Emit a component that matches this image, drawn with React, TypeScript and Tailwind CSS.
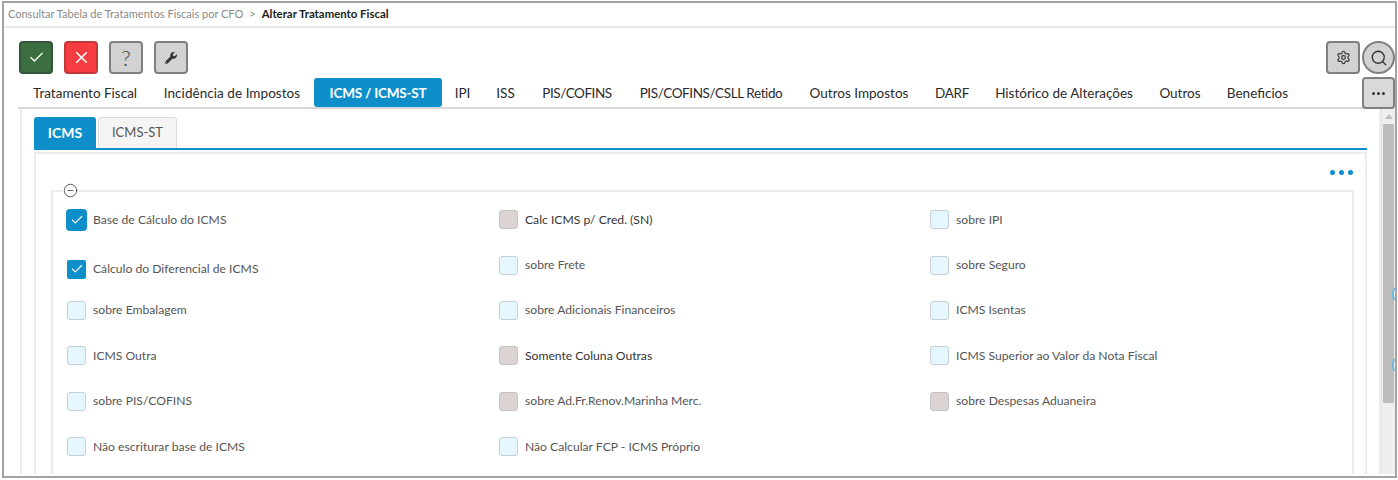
import { Check, X, Settings, Search, MoreHorizontal, CircleMinus } from "lucide-react";
import { FaWrench } from "react-icons/fa";

const tabs = [
  { t: "Tratamento Fiscal", w: "w-[130px]" },
  { t: "Incidência de Impostos", w: "w-[164px] tracking-[0.05px]" },
  { t: "ICMS / ICMS-ST", w: "w-[128px] tracking-[-0.2px]" },
  { t: "IPI", w: "w-[41px]" },
  { t: "ISS", w: "w-[45px]" },
  { t: "PIS/COFINS", w: "w-[98px] tracking-[-0.45px]" },
  { t: "PIS/COFINS/CSLL Retido", w: "w-[170px] tracking-[-0.4px]" },
  { t: "Outros Impostos", w: "w-[126px]" },
  { t: "DARF", w: "w-[60px] tracking-[-0.3px]" },
  { t: "Histórico de Alterações", w: "w-[164px]" },
  { t: "Outros", w: "w-[68px]" },
  { t: "Beneficios", w: "w-[87px]" },
];

type Cell = { label: string; kind: "on" | "off" | "dis"; big?: boolean; low?: boolean };
const cells: Cell[] = [
  { label: "Base de Cálculo do ICMS", kind: "on", big: true },
  { label: "Calc ICMS p/ Cred. (SN)", kind: "dis" },
  { label: "sobre IPI", kind: "off" },
  { label: "Cálculo do Diferencial de ICMS", kind: "on", low: true },
  { label: "sobre Frete", kind: "off" },
  { label: "sobre Seguro", kind: "off" },
  { label: "sobre Embalagem", kind: "off" },
  { label: "sobre Adicionais Financeiros", kind: "off" },
  { label: "ICMS Isentas", kind: "off" },
  { label: "ICMS Outra", kind: "off" },
  { label: "Somente Coluna Outras", kind: "dis" },
  { label: "ICMS Superior ao Valor da Nota Fiscal", kind: "off" },
  { label: "sobre PIS/COFINS", kind: "off" },
  { label: "sobre Ad.Fr.Renov.Marinha Merc.", kind: "dis" },
  { label: "sobre Despesas Aduaneira", kind: "dis" },
  { label: "Não escriturar base de ICMS", kind: "off" },
  { label: "Não Calcular FCP - ICMS Próprio", kind: "off" },
];

function Box({ c }: { c: Cell }) {
  if (c.kind === "on") {
    return (
      <span className={c.big ? "flex h-[22px] w-[21px] items-center justify-center rounded-[4px] bg-[#0f8fca] -ml-[1px] -mr-[1px]" : "flex h-[19px] w-[19px] items-center justify-center rounded-[2px] bg-[#0f8fca]"}>
        <Check size={14} strokeWidth={2} className="text-white" />
      </span>
    );
  }
  return (
    <span className={c.kind === "dis" ? "block h-[19px] w-[19px] rounded-[3px] border border-[#c4c4c4] bg-[#dcd3d3]" : "block h-[19px] w-[19px] rounded-[3px] border border-[#c4d0d6] bg-[#e6f6fd]"} />
  );
}

function ToolBtn({ className, children }: { className: string; children: React.ReactNode }) {
  return <button className={`flex h-[33px] w-[34px] items-center justify-center rounded-[4px] border-2 ${className}`}>{children}</button>;
}

export default function App() {
  return (
    <div className="h-[480px] w-[1398px] overflow-hidden bg-white pl-[2px] pt-[1px] font-['Lato',sans-serif]">
      <div className="relative flex h-[477px] w-[1395px] flex-col overflow-hidden border-2 border-[#a3a3a3] pb-[2px]">
        <div className="flex h-[25px] shrink-0 items-center gap-[6px] border-b-2 border-[#e8e8e8] pb-[1px] pl-[4px] text-[11px]">
          <span className="text-[#8a8a8a]">Consultar Tabela de Tratamentos Fiscais por CFO</span>
          <span className="text-[#8a8a8a]">&gt;</span>
          <span className="text-[11.4px] font-bold text-[#1c1c1c]">Alterar Tratamento Fiscal</span>
        </div>

        <div className="flex h-[50px] shrink-0 items-end justify-between pb-[4px] pl-[15px] pr-0">
          <div className="flex gap-[11px]">
            <ToolBtn className="border-[#33533a] bg-[#3b6e40]"><Check size={17} strokeWidth={1.75} className="text-white" /></ToolBtn>
            <ToolBtn className="border-[#c4383c] bg-[#f63d42]"><X size={19} strokeWidth={2} className="text-white" /></ToolBtn>
            <ToolBtn className="border-[#808080] bg-[#d2d2d2]"><span className="text-[22px] font-light leading-none text-[#444]">?</span></ToolBtn>
            <ToolBtn className="border-[#808080] bg-[#d2d2d2]"><FaWrench size={12} className="text-[#333]" /></ToolBtn>
          </div>
          <div className="flex items-center gap-[2px]">
            <ToolBtn className="border-[#808080] bg-[#d2d2d2]"><Settings size={15} strokeWidth={1.75} className="text-[#333]" /></ToolBtn>
            <button className="flex h-[33px] w-[33px] items-center justify-center rounded-full border-2 border-[#808080] bg-[#d2d2d2]"><Search size={18} strokeWidth={1.75} className="text-[#333]" /></button>
          </div>
        </div>

        <div className="relative ml-[14px] flex h-[31px] shrink-0 items-stretch border-b-2 border-[#d8d8d8] pl-[2px]">
          <div className="flex items-stretch">
            {tabs.map(({ t, w }) => (
              <div key={t} className={t === "ICMS / ICMS-ST" ? `flex items-center justify-center rounded-[3px] bg-[#0f8fca] pt-[1px] text-[13.5px] font-bold text-white ${w}` : `flex items-center justify-center pt-[1px] text-[13.5px] text-[#2a2a2a] ${w}`}>{t}</div>
            ))}
          </div>
          <button className="absolute -top-[1px] right-0 flex h-[32px] w-[33px] items-center justify-center rounded-[4px] border-2 border-[#808080] bg-[#d9d9d9]"><MoreHorizontal size={17} strokeWidth={2.25} className="text-[#333]" /></button>
        </div>

        <div className="flex min-h-0 flex-1">
          <div className="ml-[16px] flex min-w-0 flex-1 flex-col border-x-2 border-[#ececec] px-[12px] pt-[8px]">
            <div className="flex h-[33px] shrink-0 items-stretch gap-[2px] border-b-2 border-[#0f8fca]">
              <div className="flex w-[62px] items-center justify-center rounded-t-[3px] bg-[#0f8fca] text-[14px] font-bold text-white">ICMS</div>
              <div className="flex w-[79px] items-center justify-center rounded-t-[3px] border border-b-0 border-[#dcdcdc] bg-[#f5f5f5] text-[13px] text-[#555]">ICMS-ST</div>
            </div>
            <div className="mt-[2px] flex min-h-0 flex-1 flex-col border-x-2 border-t-2 border-[#ececec] pl-[15px] pr-[11px]">
              <div className="flex h-[36px] shrink-0 items-center justify-end gap-[4px] pr-[1px]">
                <span className="h-[5px] w-[5px] rounded-full bg-[#0f8fca]" />
                <span className="h-[5px] w-[5px] rounded-full bg-[#0f8fca]" />
                <span className="h-[5px] w-[5px] rounded-full bg-[#0f8fca]" />
              </div>
              <div className="relative flex-1 border-x-2 border-t-2 border-[#ececec] pl-[14px] pt-[5px]">
                <span className="absolute -top-[9px] left-[9px] bg-white px-[1px]"><CircleMinus size={15} strokeWidth={1.25} className="text-[#333]" /></span>
                <div className="grid auto-rows-[45.4px] grid-cols-[432px_431px_1fr]">
                  {cells.map((c) => (
                    <div key={c.label} className={c.low ? "flex items-center gap-[7px] pt-[8px]" : "flex items-center gap-[7px]"}>
                      <Box c={c} />
                      <span className={c.label.startsWith("Calc ") || c.label.startsWith("Somente") ? "text-[12.15px] text-[#333]" : "text-[12.15px] text-[#555]"}>{c.label}</span>
                    </div>
                  ))}
                </div>
              </div>
            </div>
          </div>
          <div className="flex w-[14px] shrink-0 flex-col border-l border-[#e4e4e4] bg-[#efefef] px-[1px]">
            <div className="flex h-[15px] items-center justify-center"><span className="h-0 w-0 border-x-[4px] border-b-[5px] border-x-transparent border-b-[#bcbcbc]" /></div>
            <div className="h-[279px] bg-[#bdbdbd]" />
          </div>
        </div>
        <span className="absolute -right-[7px] top-[284px] h-[14px] w-[10px] rounded-full border-2 border-[#6db8de]" />
        <span className="absolute -right-[7px] top-[355px] h-[14px] w-[10px] rounded-full border-2 border-[#6db8de]" />
      </div>
    </div>
  );
}
